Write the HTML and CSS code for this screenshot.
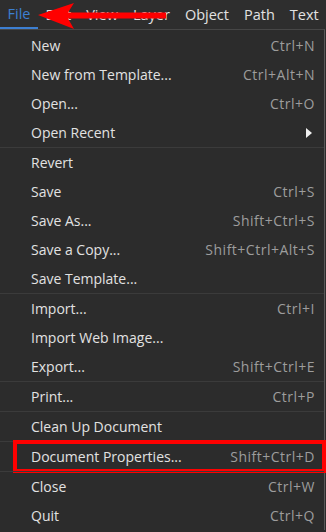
FILE: index.html
```html
<!DOCTYPE html>
<html lang="en">
<head>
  <meta charset="UTF-8" />
  <title>File menu</title>
  <link rel="stylesheet" href="styles.css">
</head>
<body>
  <div class="app">
    <nav class="menubar">
      <span class="menubar-item active">File</span>
      <span class="menubar-item">Edit</span>
      <span class="menubar-item">View</span>
      <span class="menubar-item">Layer</span>
      <span class="menubar-item">Object</span>
      <span class="menubar-item">Path</span>
      <span class="menubar-item">Text</span>
    </nav>

    <!-- annotation arrow pointing at File -->
    <svg class="arrow" width="132" height="28" viewBox="0 0 132 28">
      <polygon points="0,13 36,1 30,10.5 128,10.5 128,16.5 30,16.5 36,27" fill="#ff0000"/>
    </svg>

    <div class="menu">
      <div class="item"><span class="label">New</span><span class="key">Ctrl+N</span></div>
      <div class="item"><span class="label">New from Template...</span><span class="key">Ctrl+Alt+N</span></div>
      <div class="item"><span class="label">Open...</span><span class="key">Ctrl+O</span></div>
      <div class="item"><span class="label">Open Recent</span><span class="submenu"></span></div>
      <div class="sep"></div>
      <div class="item"><span class="label">Revert</span></div>
      <div class="item"><span class="label">Save</span><span class="key">Ctrl+S</span></div>
      <div class="item"><span class="label">Save As...</span><span class="key">Shift+Ctrl+S</span></div>
      <div class="item"><span class="label">Save a Copy...</span><span class="key">Shift+Ctrl+Alt+S</span></div>
      <div class="item"><span class="label">Save Template...</span></div>
      <div class="sep"></div>
      <div class="item"><span class="label">Import...</span><span class="key">Ctrl+I</span></div>
      <div class="item"><span class="label">Import Web Image...</span></div>
      <div class="item"><span class="label">Export...</span><span class="key">Shift+Ctrl+E</span></div>
      <div class="sep"></div>
      <div class="item"><span class="label">Print...</span><span class="key">Ctrl+P</span></div>
      <div class="sep"></div>
      <div class="item"><span class="label">Clean Up Document</span></div>
      <div class="sep"></div>
      <div class="item highlight"><span class="label">Document Properties...</span><span class="key">Shift+Ctrl+D</span></div>
      <div class="sep"></div>
      <div class="item"><span class="label">Close</span><span class="key">Ctrl+W</span></div>
      <div class="item"><span class="label">Quit</span><span class="key">Ctrl+Q</span></div>
    </div>
  </div>
</body>
</html>
```

FILE: styles.css
```css
:root {
  --bg: #2c2c2c;
  --text: #e2e2e2;
  --muted: #9d9d9d;
  --line: #3b3b3b;
  --blue: #3d7fd1;
}

* {
  margin: 0;
  padding: 0;
  box-sizing: border-box;
}

body {
  background: var(--bg);
  font-family: 'Open Sans', 'Noto Sans', sans-serif;
  font-size: 14px;
  color: var(--text);
  overflow: hidden;
}

.app {
  position: relative;
  width: 326px;
  height: 532px;
}

.menubar {
  display: flex;
  height: 29px;
  align-items: center;
  background: #2e2e2e;
  font-size: 14.5px;
  white-space: nowrap;
}

.menubar-item {
  padding: 0 7.5px;
  height: 29px;
  line-height: 29px;
}

.menubar-item.active {
  color: var(--blue);
  border-bottom: 2px solid var(--blue);
  line-height: 27px;
}

.arrow {
  position: absolute;
  left: 38px;
  top: 2px;
}

.menu {
  display: flex;
  flex-direction: column;
  width: 325px;
  border-top: 1px solid #474747;
  border-right: 1px solid #595959;
  background: var(--bg);
  padding-top: 1px;
}

.item {
  display: flex;
  align-items: center;
  justify-content: space-between;
  height: 29px;
  padding: 0 9px 0 31px;
}

.key {
  color: var(--muted);
  letter-spacing: 0.5px;
}

.submenu {
  width: 0;
  height: 0;
  margin-right: 3px;
  border-top: 5px solid transparent;
  border-bottom: 5px solid transparent;
  border-left: 6px solid #f0f0f0;
}

.sep {
  height: 1px;
  background: var(--line);
}

.item.highlight {
  margin-left: 15px;
  padding-left: 16px;
  outline: 4px solid #ff0000;
  outline-offset: -2px;
}
```
